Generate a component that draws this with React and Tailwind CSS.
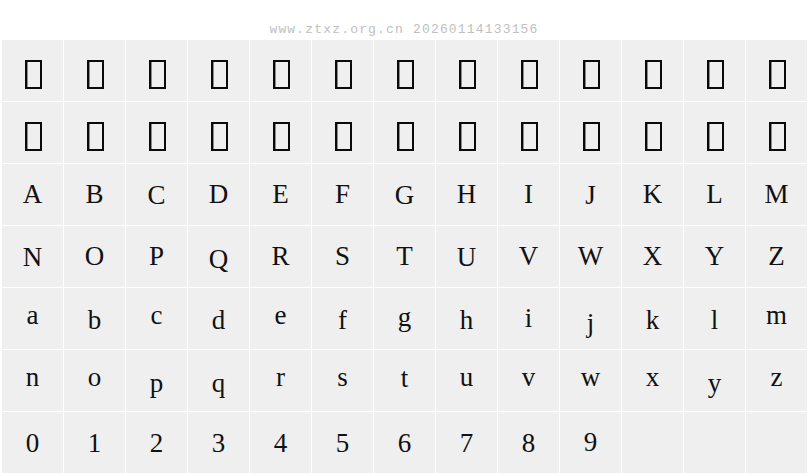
import React from "react";

const OFF = {
  "-3": "translate-y-[-3px]",
  "-2": "translate-y-[-2px]",
  "-1": "translate-y-[-1px]",
  "0": "",
  "1": "translate-y-[1px]",
  "2": "translate-y-[2px]",
  "3": "translate-y-[3px]",
  "5": "translate-y-[5px]",
};

const rows = [
  [["A",0],["B",0],["C",1],["D",0],["E",0],["F",0],["G",1],["H",0],["I",0],["J",1],["K",0],["L",0],["M",0]],
  [["N",1],["O",0],["P",0],["Q",3],["R",0],["S",0],["T",0],["U",1],["V",0],["W",0],["X",0],["Y",0],["Z",0]],
  [["a",-3],["b",2],["c",-3],["d",2],["e",-3],["f",2],["g",-1],["h",2],["i",0],["j",5],["k",2],["l",2],["m",-3]],
  [["n",-3],["o",-3],["p",3],["q",3],["r",-3],["s",-3],["t",-2],["u",-3],["v",-3],["w",-3],["x",-3],["y",3],["z",-3]],
  [["0",1],["1",1],["2",1],["3",1],["4",1],["5",1],["6",1],["7",1],["8",1],["9",0],["",0],["",0],["",0]],
];

function Tofu() {
  return (
    <div className="flex h-full w-full items-start justify-center bg-[#efefef] pt-[20px] pl-[2px]">
      <div className="h-[29px] w-[17px] border-2 border-[#0a0a0a] shadow-[inset_1px_0_0_#8a8a8a]" />
    </div>
  );
}

export default function App() {
  return (
    <div className="h-[476px] w-[808px] overflow-hidden bg-white">
      <div
        className="flex h-[40px] justify-center pt-[22px] text-[13px] leading-[15px] tracking-[1.17px] text-[#c0c0c0]"
        style={{ fontFamily: '"Liberation Mono", "DejaVu Sans Mono", monospace' }}
      >
        www.ztxz.org.cn 20260114133156
      </div>
      <div className="grid grid-cols-[repeat(13,61px)] auto-rows-[61px] gap-px pl-[2px]">
        {Array.from({ length: 26 }).map((_, i) => (
          <Tofu key={"t" + i} />
        ))}
        {rows.flat().map(([ch, off], i) => (
          <div
            key={"c" + i}
            className="flex items-center justify-center bg-[#efefef] text-[27px] text-[#111]"
            style={{ fontFamily: '"Liberation Serif", "Times New Roman", serif' }}
          >
            <span className={OFF[String(off)]}>{ch}</span>
          </div>
        ))}
      </div>
    </div>
  );
}
